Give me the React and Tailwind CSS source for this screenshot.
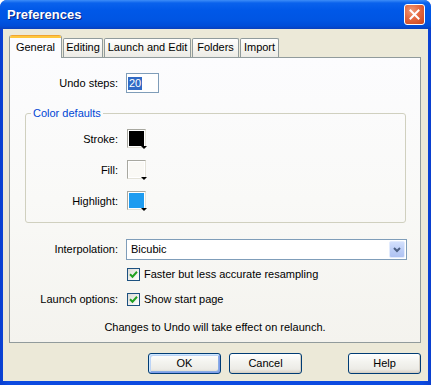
import React from "react";

function Check() {
  return (
    <span className="flex h-[13px] w-[13px] shrink-0 items-center justify-center border border-[#1C5180] bg-[linear-gradient(135deg,#DCDCD7_0%,#FFFFFF_100%)]">
      <svg width="9" height="9" viewBox="0 0 9 9">
        <path d="M1 4.2 L3.5 6.7 L8 1.8" stroke="#21A121" strokeWidth="2" fill="none" />
      </svg>
    </span>
  );
}

function Swatch({ fill }) {
  return (
    <div className="relative h-[20px] w-[20px]">
      <div className="h-[19px] w-[19px] border border-[#A8A8A0] border-r-[#E4E2D8] border-b-[#E4E2D8] bg-white p-[1px]">
        <div className={"h-full w-full " + fill} />
      </div>
      <div className="absolute bottom-[0px] right-[0px] h-0 w-0 border-l-[3px] border-r-[3px] border-t-[3px] border-l-transparent border-r-transparent border-t-black" />
    </div>
  );
}

function Tab({ label, w, selected }) {
  if (selected) {
    return (
      <div className={"relative z-10 -mb-[1px] flex h-[23px] flex-col overflow-hidden rounded-t-[3px] border-x border-[#919B9C] bg-[#FCFCFE] " + w}>
        <div className="h-[3px] shrink-0 bg-[linear-gradient(to_bottom,#E68B2C_0%,#FFC73C_40%,#FFC73C_100%)]" />
        <div className="flex flex-1 items-center justify-center pb-[2px]">{label}</div>
      </div>
    );
  }
  return (
    <div className={"flex h-[19px] items-center justify-center rounded-t-[2px] border-x border-t border-[#919B9C] bg-[linear-gradient(to_bottom,#FFFFFF_0%,#F6F5F0_50%,#ECEBE6_100%)] pb-[1px] " + w}>
      {label}
    </div>
  );
}

function Button({ children, def }) {
  return (
    <div
      className={
        "flex h-[21px] w-[73px] items-center justify-center rounded-[3px] border border-[#003C74] bg-[linear-gradient(to_bottom,#FFFFFF_0%,#F4F4F0_40%,#ECEBE6_80%,#D6D0C5_100%)] " +
        (def
          ? "shadow-[inset_1px_1px_0_#CEE7FF,inset_-1px_-1px_0_#7E9CEB,inset_2px_2px_0_#BCD4F6,inset_-2px_-2px_0_#89ADE4]"
          : "shadow-[inset_-1px_-1px_0_#D6D0C5]")
      }
    >
      {children}
    </div>
  );
}

export default function App() {
  return (
    <div className="flex h-[385px] w-[431px] flex-col overflow-hidden rounded-t-[7px] bg-[linear-gradient(to_right,#0A3FCF_0%,#0C4AE0_2%,#0C4AE0_98%,#0A3FCF_100%)] font-['Liberation_Sans',Arial,sans-serif] text-[11px] text-black">
      {/* Title bar */}
      <div className="flex h-[29px] shrink-0 items-center justify-between pl-[7px] pr-[6px] bg-[linear-gradient(to_bottom,#3D8DF8_0px,#0A62EC_3px,#0058E8_10px,#0055E3_20px,#004DD8_26px,#0A3FBB_29px)]">
        <span className="text-[13px] font-bold text-white [text-shadow:1px_1px_0_#0A2180]">Preferences</span>
        <div className="flex h-[21px] w-[21px] items-center justify-center rounded-[3px] border border-white bg-[radial-gradient(circle_at_35%_30%,#F09A78_0%,#E4683F_45%,#C8421C_100%)]">
          <svg width="11" height="11" viewBox="0 0 11 11">
            <path d="M1.5 1.5 L9.5 9.5 M9.5 1.5 L1.5 9.5" stroke="white" strokeWidth="2" strokeLinecap="square" />
          </svg>
        </div>
      </div>

      {/* Body */}
      <div className="mx-[3px] mb-[4px] flex flex-1 flex-col bg-[#ECE9D8]">
        {/* Tabs */}
        <div className="flex h-[28px] shrink-0 items-end gap-[1px] pl-[6px]">
          <Tab label="General" w="w-[53px]" selected />
          <Tab label="Editing" w="w-[40px]" />
          <Tab label="Launch and Edit" w="w-[87px]" />
          <Tab label="Folders" w="w-[47px]" />
          <Tab label="Import" w="w-[39px]" />
        </div>

        {/* Panel */}
        <div className="ml-[6px] mr-[7px] flex h-[286px] shrink-0 flex-col border border-[#919B9C] bg-[linear-gradient(to_bottom,#FCFCFE_0%,#F9F9F7_50%,#F4F3EE_100%)]">
          {/* Undo steps */}
          <div className="mt-[15px] flex h-[20px] items-center">
            <div className="w-[108px] text-right">Undo steps:</div>
            <div className="ml-[8px] flex h-[20px] w-[33px] items-center border border-[#7F9DB9] bg-white pl-[1px]">
              <span className="bg-[#316AC5] px-[1px] leading-[13px] text-white">20</span>
            </div>
          </div>

          {/* Color defaults */}
          <fieldset className="mx-[15px] mt-[14px] mr-[14px] rounded-[3px] border border-[#D0D0BF] pb-[11px] pt-[9px]">
            <legend className="ml-[5px] px-[2px] leading-[13px] text-[#0046D5]">Color defaults</legend>
            <div className="flex flex-col gap-[11px]">
              <div className="flex h-[20px] items-center">
                <div className="w-[92px] text-right">Stroke:</div>
                <div className="ml-[9px]"><Swatch fill="bg-black" /></div>
              </div>
              <div className="flex h-[20px] items-center">
                <div className="w-[92px] text-right">Fill:</div>
                <div className="ml-[9px]"><Swatch fill="bg-[#FAF9F5]" /></div>
              </div>
              <div className="flex h-[20px] items-center">
                <div className="w-[92px] text-right">Highlight:</div>
                <div className="ml-[9px]"><Swatch fill="bg-[#1E9CF0]" /></div>
              </div>
            </div>
          </fieldset>

          {/* Interpolation */}
          <div className="mt-[16px] flex h-[21px] items-center">
            <div className="w-[108px] text-right">Interpolation:</div>
            <div className="ml-[8px] flex h-[21px] w-[281px] items-center justify-between border border-[#7F9DB9] bg-white pl-[4px] pr-[1px]">
              <span>Bicubic</span>
              <div className="flex h-[17px] w-[16px] items-center justify-center rounded-[2px] border border-[#E2EBFD] bg-[linear-gradient(to_bottom,#D3E0FC_0%,#BACCF6_60%,#AFC2F2_100%)]">
                <svg width="8" height="6" viewBox="0 0 8 6">
                  <path d="M1 1 L4 4 L7 1" stroke="#4D6185" strokeWidth="2" fill="none" />
                </svg>
              </div>
            </div>
          </div>

          {/* Faster */}
          <div className="mt-[8px] flex h-[13px] items-center pl-[117px]">
            <Check />
            <span className="ml-[4px]">Faster but less accurate resampling</span>
          </div>

          {/* Launch options */}
          <div className="mt-[12px] flex h-[13px] items-center">
            <div className="w-[108px] text-right">Launch options:</div>
            <div className="ml-[9px] flex items-center">
              <Check />
              <span className="ml-[4px]">Show start page</span>
            </div>
          </div>

          {/* Note */}
          <div className="mt-[15px] text-center leading-[13px]">Changes to Undo will take effect on relaunch.</div>
        </div>

        {/* Buttons */}
        <div className="mt-[10px] flex items-center pl-[145px] pr-[7px]">
          <Button def>OK</Button>
          <div className="ml-[8px]"><Button>Cancel</Button></div>
          <div className="ml-auto"><Button>Help</Button></div>
        </div>
      </div>
    </div>
  );
}
